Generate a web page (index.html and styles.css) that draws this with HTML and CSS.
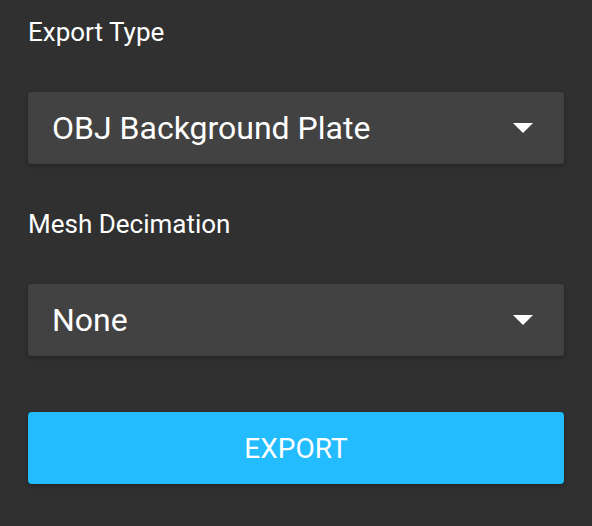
FILE: index.html
```html
<!DOCTYPE html>
<html>
<head>
<meta charset="utf-8">
<link rel="stylesheet" href="styles.css">
</head>
<body>
<div class="panel">
  <div class="label">Export Type</div>
  <div class="select">
    <span class="value">OBJ Background Plate</span>
    <svg class="arrow" width="20" height="10" viewBox="0 0 20 10"><path d="M0 0H20L10 10Z" fill="#fff"/></svg>
  </div>
  <div class="label">Mesh Decimation</div>
  <div class="select">
    <span class="value">None</span>
    <svg class="arrow" width="20" height="10" viewBox="0 0 20 10"><path d="M0 0H20L10 10Z" fill="#fff"/></svg>
  </div>
  <button class="export">EXPORT</button>
</div>
</body>
</html>
```
FILE: styles.css
```css
html, body {
  margin: 0;
  padding: 0;
  background: #303030;
  width: 592px;
  height: 526px;
  overflow: hidden;
}
.panel {
  display: flex;
  flex-direction: column;
  padding: 14px 28px 0 28px;
  font-family: Roboto, "Liberation Sans", sans-serif;
  color: #fff;
}
.label {
  font-size: 26px;
  line-height: 36px;
  height: 36px;
  margin-bottom: 42px;
}
.select {
  height: 72px;
  background: #424242;
  border-radius: 4px;
  box-shadow: 0 2px 4px rgba(0,0,0,0.25);
  display: flex;
  align-items: center;
  justify-content: space-between;
  padding: 0 31px 0 24px;
  margin-bottom: 42px;
}
.value {
  font-size: 32px;
  line-height: 40px;
}
.arrow {
  display: block;
}
.export {
  margin-top: 14px;
  height: 72px;
  border: none;
  border-radius: 4px;
  background: #22bcff;
  color: #fff;
  font-family: Roboto, "Liberation Sans", sans-serif;
  font-size: 28px;
  box-shadow: 0 2px 4px rgba(0,0,0,0.25);
}
```
